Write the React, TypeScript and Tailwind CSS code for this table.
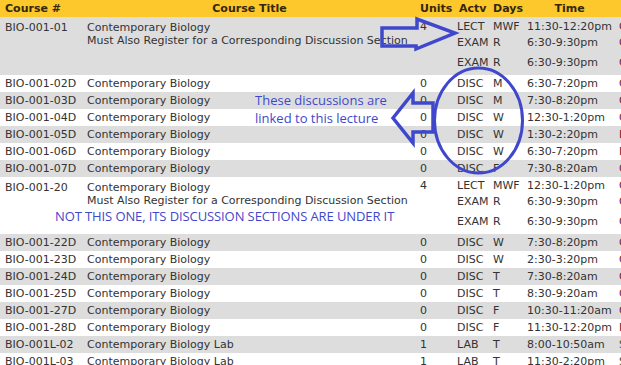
import React from 'react';

type Meet = { units: string; actv: string; days: string; time: string; last: string; tone: string };
type Section = { id: string; title: string; note?: string; meets: Meet[] };

const round = '#7b1f45';
const bar = '#8c0b22';
const dark = '#4b4b2e';

const m = (units: string, actv: string, days: string, time: string, last = 'O', tone = round): Meet => ({ units, actv, days, time, last, tone });

const note = 'Must Also Register for a Corresponding Discussion Section';

const sections: Section[] = [
  {
    id: 'BIO-001-01',
    title: 'Contemporary Biology',
    note,
    meets: [m('4', 'LECT', 'MWF', '11:30-12:20pm'), m('', 'EXAM', 'R', '6:30-9:30pm'), m('', 'EXAM', 'R', '6:30-9:30pm')],
  },
  { id: 'BIO-001-02D', title: 'Contemporary Biology', meets: [m('0', 'DISC', 'M', '6:30-7:20pm')] },
  { id: 'BIO-001-03D', title: 'Contemporary Biology', meets: [m('0', 'DISC', 'M', '7:30-8:20pm')] },
  { id: 'BIO-001-04D', title: 'Contemporary Biology', meets: [m('0', 'DISC', 'W', '12:30-1:20pm')] },
  { id: 'BIO-001-05D', title: 'Contemporary Biology', meets: [m('0', 'DISC', 'W', '1:30-2:20pm', 'D', bar)] },
  { id: 'BIO-001-06D', title: 'Contemporary Biology', meets: [m('0', 'DISC', 'W', '6:30-7:20pm', 'D', bar)] },
  { id: 'BIO-001-07D', title: 'Contemporary Biology', meets: [m('0', 'DISC', 'F', '7:30-8:20am')] },
  {
    id: 'BIO-001-20',
    title: 'Contemporary Biology',
    note,
    meets: [m('4', 'LECT', 'MWF', '12:30-1:20pm'), m('', 'EXAM', 'R', '6:30-9:30pm'), m('', 'EXAM', 'R', '6:30-9:30pm')],
  },
  { id: 'BIO-001-22D', title: 'Contemporary Biology', meets: [m('0', 'DISC', 'W', '7:30-8:20pm')] },
  { id: 'BIO-001-23D', title: 'Contemporary Biology', meets: [m('0', 'DISC', 'W', '2:30-3:20pm')] },
  { id: 'BIO-001-24D', title: 'Contemporary Biology', meets: [m('0', 'DISC', 'T', '7:30-8:20am')] },
  { id: 'BIO-001-25D', title: 'Contemporary Biology', meets: [m('0', 'DISC', 'T', '8:30-9:20am')] },
  { id: 'BIO-001-27D', title: 'Contemporary Biology', meets: [m('0', 'DISC', 'F', '10:30-11:20am')] },
  { id: 'BIO-001-28D', title: 'Contemporary Biology', meets: [m('0', 'DISC', 'F', '11:30-12:20pm', 'D', bar)] },
  { id: 'BIO-001L-02', title: 'Contemporary Biology Lab', meets: [m('1', 'LAB', 'T', '8:00-10:50am', 'S', dark)] },
  { id: 'BIO-001L-03', title: 'Contemporary Biology Lab', meets: [m('1', 'LAB', 'T', '11:30-2:20pm', 'S', dark)] },
];

const MeetLine = ({ meet, className }: { meet: Meet; className: string }) => (
  <div className={`flex whitespace-nowrap ${className}`}>
    <div className="w-[37px] pl-[4px]">{meet.units}</div>
    <div className="w-[36px] pl-[4px]">{meet.actv}</div>
    <div className="w-[34px] pl-[4px]">{meet.days}</div>
    <div className="w-[93px] pl-[4px]">{meet.time}</div>
    <div className="w-[40px] pl-[3px]" style={{ color: meet.tone }}>{meet.last}</div>
  </div>
);

const Row = ({ section, index }: { section: Section; index: number }) => {
  const bg = index % 2 === 0 ? 'bg-[#dddddd]' : 'bg-white';
  const multi = section.meets.length > 1;

  if (!multi) {
    return (
      <div className={`flex h-[17px] leading-[17px] ${bg}`}>
        <div className="w-[83px] shrink-0 pl-[5px] whitespace-nowrap">{section.id}</div>
        <div className="w-[333px] shrink-0 pl-[4px] whitespace-nowrap">{section.title}</div>
        <MeetLine meet={section.meets[0]} className="h-[17px]" />
      </div>
    );
  }

  return (
    <div className={`flex ${index === 0 ? 'h-[58px]' : 'h-[57px]'} ${bg}`}>
      <div className="w-[83px] shrink-0 pl-[5px] pt-[4px] leading-[13px] whitespace-nowrap">{section.id}</div>
      <div className="w-[333px] shrink-0 pl-[4px] pt-[4px] leading-[13px] whitespace-nowrap">
        <div>{section.title}</div>
        <div>{section.note}</div>
      </div>
      <div className={`flex flex-col ${index === 0 ? 'pt-[2px]' : 'pt-[1px]'}`}>
        <MeetLine meet={section.meets[0]} className="h-[16px] leading-[16px]" />
        <MeetLine meet={section.meets[1]} className="h-[16px] leading-[16px]" />
        <MeetLine meet={section.meets[2]} className="mt-[4px] h-[16px] leading-[16px]" />
      </div>
    </div>
  );
};

const App: React.FC = () => {
  return (
    <div className="relative w-[621px] h-[365px] overflow-hidden bg-white font-['DejaVu_Sans',sans-serif] text-[11px] text-[#333333]">
      <div className="w-[680px]">
        <div className="flex h-[17px] leading-[17px] bg-[#fdc82c] font-bold text-[#34270a] whitespace-nowrap">
          <div className="w-[83px] shrink-0 pl-[5px]">Course #</div>
          <div className="w-[333px] shrink-0 text-center">Course Title</div>
          <div className="w-[37px] shrink-0 pl-[4px]">Units</div>
          <div className="w-[36px] shrink-0 pl-[6px]">Actv</div>
          <div className="w-[34px] shrink-0 pl-[4px]">Days</div>
          <div className="w-[93px] shrink-0 text-center">Time</div>
        </div>
        {sections.map((section, index) => (
          <Row key={section.id} section={section} index={index} />
        ))}
      </div>

      {/* paint-style annotations over the table */}
      <div className="absolute left-[255px] top-[91px] font-['Open_Sans',sans-serif] text-[13px] leading-[18px] text-[#3f48cc] whitespace-nowrap">
        <div>These discussions are</div>
        <div>linked to this lecture</div>
      </div>
      <div className="absolute left-[55px] top-[207px] font-['Open_Sans',sans-serif] text-[13px] leading-[18px] tracking-[-0.1px] text-[#3f48cc] whitespace-nowrap">
        NOT THIS ONE, ITS DISCUSSION SECTIONS ARE UNDER IT
      </div>
      <svg className="absolute left-0 top-0 pointer-events-none" width="621" height="365" viewBox="0 0 621 365">
        <polygon
          points="382,28 417,28 417,19 455,33 416,49 416,46 382,46"
          fill="none"
          stroke="#3f48cc"
          strokeWidth="3.5"
          strokeLinejoin="miter"
        />
        <polygon
          points="393,118 413,93 413,103 433,103 433,132 413,132 413,143"
          fill="none"
          stroke="#3f48cc"
          strokeWidth="3.5"
          strokeLinejoin="miter"
        />
        <ellipse cx="478.5" cy="120.5" rx="44" ry="52.5" fill="none" stroke="#3f48cc" strokeWidth="3" />
      </svg>
    </div>
  );
};

export default App;
